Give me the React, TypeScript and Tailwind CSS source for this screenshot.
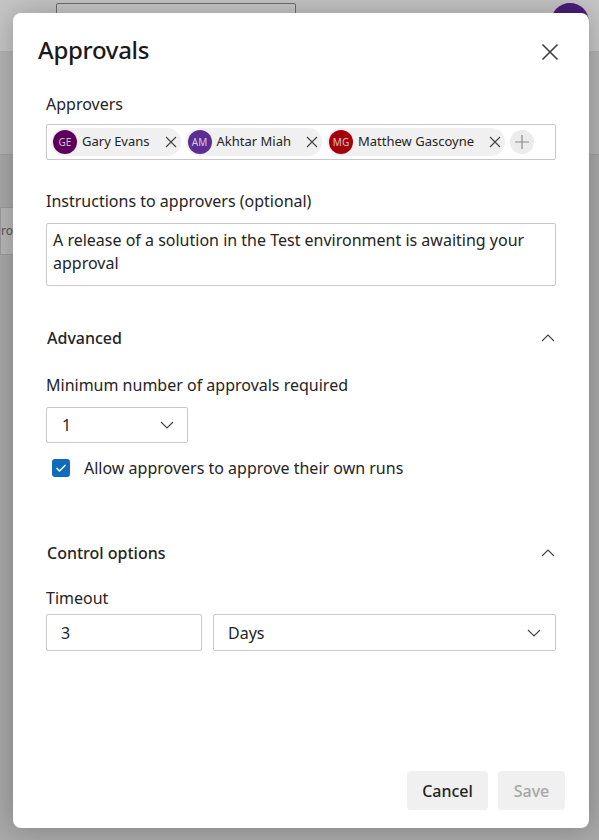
import React from 'react';

const font = { fontFamily: '"Noto Sans", "Open Sans", sans-serif' };

interface Person {
  initials: string;
  name: string;
  color: string;
}

const people: Person[] = [
  { initials: 'GE', name: 'Gary Evans', color: 'bg-[#5c005c]' },
  { initials: 'AM', name: 'Akhtar Miah', color: 'bg-[#5c2e91]' },
  { initials: 'MG', name: 'Matthew Gascoyne', color: 'bg-[#a4000a]' },
];

const XIcon = ({ size = 12, className = '' }: { size?: number; className?: string }) => (
  <svg width={size} height={size} viewBox="0 0 12 12" className={className}>
    <path d="M1 1 L11 11 M11 1 L1 11" stroke="currentColor" strokeWidth="1.1" fill="none" />
  </svg>
);

const Chevron = ({ up = false, className = '' }: { up?: boolean; className?: string }) => (
  <svg width="14" height="8" viewBox="0 0 14 8" className={className}>
    <path
      d={up ? 'M1 7 L7 1 L13 7' : 'M1 1 L7 7 L13 1'}
      stroke="currentColor"
      strokeWidth="1.1"
      fill="none"
    />
  </svg>
);

const Chip: React.FC<{ person: Person }> = ({ person }) => (
  <div className="flex h-[28px] shrink-0 items-center rounded-full bg-[#f0f0f0] pr-[4px]">
    <div
      className={`ml-[2px] flex h-[24px] w-[24px] items-center justify-center rounded-full text-[10px] text-white/75 ${person.color}`}
    >
      {person.initials}
    </div>
    <span className="ml-[5px] whitespace-nowrap text-[13px] text-[#242424]">{person.name}</span>
    <XIcon className="ml-[15px] text-[#424242]" />
  </div>
);

const Section: React.FC<{ title: string }> = ({ title }) => (
  <div className="flex items-center justify-between px-[1px]">
    <span className="text-[16px] font-medium text-[#242424]">{title}</span>
    <Chevron up className="text-[#424242]" />
  </div>
);

export default function App() {
  return (
    <div className="relative h-[840px] w-[599px] overflow-hidden bg-[#a9a9a9]" style={font}>
      {/* page behind the overlay */}
      <div className="relative h-[52px] border-b border-[#b3b3b3] bg-[#c6c6c6]">
        <div className="absolute left-[56px] top-[3px] h-[14px] w-[240px] rounded-[2px] border border-[#6e6e6e] bg-[#c8c8c8]" />
        <div className="absolute left-[551px] top-[3px] h-[38px] w-[38px] rounded-full bg-[#4a1e78]" />
      </div>
      <div className="h-[103px] border-b border-[#a0a0a0] bg-[#b4b4b4]" />
      <div className="mt-[52px] flex h-[48px] w-[40px] items-center border border-[#9c9c9c] bg-[#b8b8b8]">
        <span className="text-[12px] leading-none text-[#555]">rov</span>
      </div>

      {/* dialog */}
      <div className="absolute left-[13px] top-[13px] flex h-[815px] w-[576px] flex-col rounded-[8px] bg-white shadow-[0_0_30px_rgba(0,0,0,0.25)]">
        <div className="flex items-center justify-between pl-[25px] pr-[30px] pt-[19px]">
          <h1 className="text-[24px] font-medium tracking-[-0.3px] text-[#1a1a1a]">Approvals</h1>
          <XIcon size={18} className="mt-[4px] text-[#424242]" />
        </div>

        <div className="flex flex-col px-[33px] pt-[25px] text-[#242424]">
          <label className="text-[16px] leading-[22px]">Approvers</label>
          <div className="mt-[9px] flex h-[36px] items-center gap-[5px] rounded-[2px] border border-[#c8c8c8] pl-[4px]">
            {people.map((p) => (
              <Chip key={p.initials} person={p} />
            ))}
            <div className="flex h-[24px] w-[24px] shrink-0 items-center justify-center rounded-full bg-[#ececec] text-[#8a8a8a]">
              <svg width="14" height="14" viewBox="0 0 14 14">
                <path d="M7 0 V14 M0 7 H14" stroke="currentColor" strokeWidth="1.2" />
              </svg>
            </div>
          </div>

          <label className="mt-[30px] text-[16px] leading-[22px]">Instructions to approvers (optional)</label>
          <div className="mt-[11px] h-[63px] rounded-[2px] border border-[#c8c8c8] px-[6px] pt-[5px] text-[16px] leading-[23px]">
            A release of a solution in the Test environment is awaiting your approval
          </div>

          <div className="mt-[40px]">
            <Section title="Advanced" />
          </div>
          <label className="mt-[24px] text-[16px] leading-[22px]">Minimum number of approvals required</label>
          <div className="mt-[11px] flex h-[36px] w-[142px] items-center justify-between rounded-[2px] border border-[#c8c8c8] pl-[15px] pr-[13px]">
            <span className="text-[16px]">1</span>
            <Chevron className="text-[#424242]" />
          </div>
          <div className="mt-[13px] flex items-center pl-[6px]">
            <div className="flex h-[18px] w-[18px] items-center justify-center rounded-[3px] bg-[#0f6cbd]">
              <svg width="12" height="10" viewBox="0 0 12 10">
                <path d="M1.5 5 L4.5 8 L10.5 2" stroke="white" strokeWidth="1.4" fill="none" />
              </svg>
            </div>
            <span className="ml-[14px] text-[16px]">Allow approvers to approve their own runs</span>
          </div>

          <div className="mt-[61px]">
            <Section title="Control options" />
          </div>
          <label className="mt-[22px] text-[16px] leading-[22px]">Timeout</label>
          <div className="mt-[5px] flex gap-[11px]">
            <div className="flex h-[37px] w-[156px] items-center rounded-[2px] border border-[#c8c8c8] pl-[14px] text-[16px]">
              3
            </div>
            <div className="flex h-[37px] flex-1 items-center justify-between rounded-[2px] border border-[#c8c8c8] px-[14px] text-[16px]">
              <span>Days</span>
              <Chevron className="text-[#424242]" />
            </div>
          </div>
        </div>

        <div className="mt-auto flex justify-end gap-[10px] pb-[18px] pr-[24px]">
          <button className="h-[39px] w-[81px] rounded-[4px] bg-[#f0f0f0] text-[16px] font-medium text-[#242424]">
            Cancel
          </button>
          <button className="h-[39px] w-[67px] rounded-[4px] bg-[#f0f0f0] text-[16px] font-medium text-[#a6a6a6]">
            Save
          </button>
        </div>
      </div>
    </div>
  );
}
